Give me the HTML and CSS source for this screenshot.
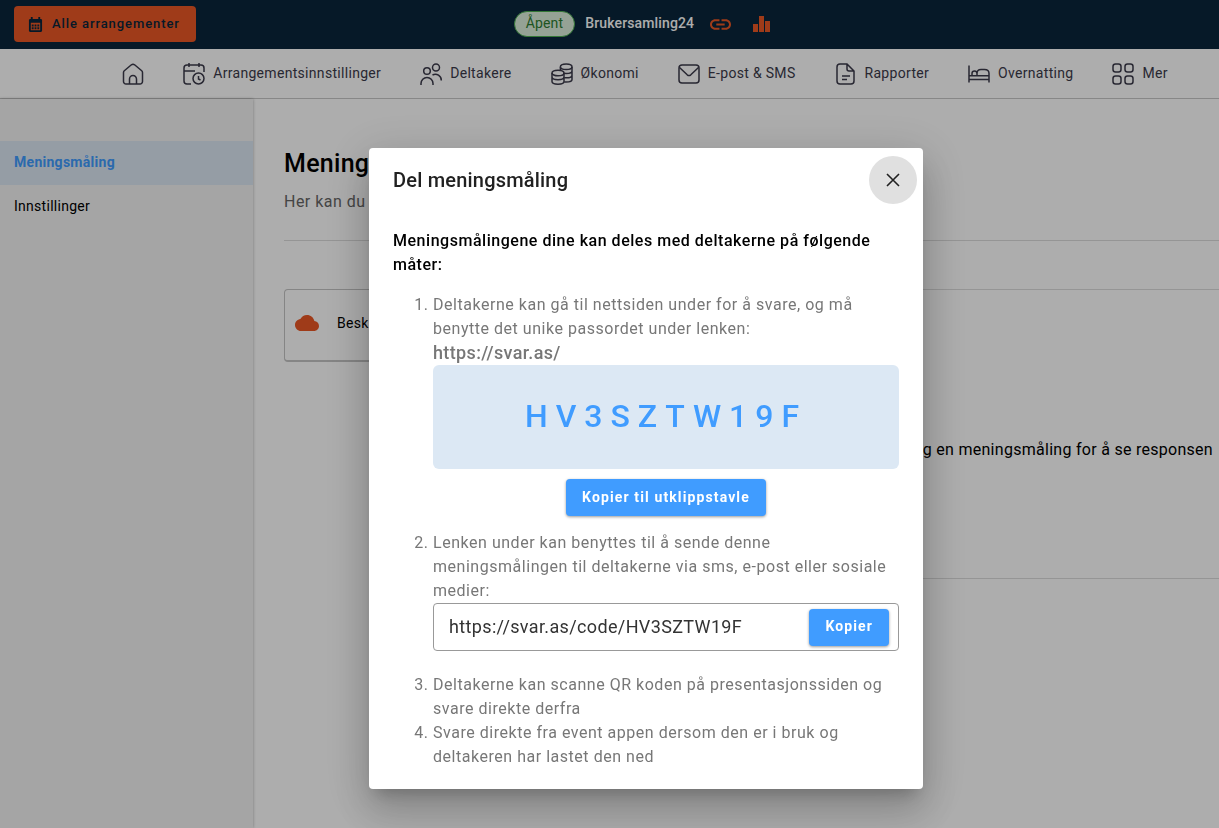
FILE: index.html
```html
<!DOCTYPE html>
<html lang="no">
<head>
<meta charset="utf-8">
<meta name="viewport" content="width=device-width, initial-scale=1">
<title>Meningsmåling</title>
<link rel="stylesheet" href="styles.css">
</head>
<body>
<div class="app">
  <header class="topbar">
    <button class="btn btn-orange" type="button">
      <svg class="icon-sm" viewBox="0 0 16 16" fill="currentColor" aria-hidden="true"><path fill-rule="evenodd" d="M3 0h2v2h6V0h2v2h1l1 1v12l-1 1H2l-1-1V3l1-1h1zM3 6v8h10V6zM4 8h2v2H4zM7 8h2v2H7zM10 8h2v2h-2zM4 11h2v2H4zM7 11h2v2H7zM10 11h2v2h-2z"/></svg>
      Alle arrangementer
    </button>
    <div class="event">
      <span class="chip">Åpent</span>
      <span class="event-name">Brukersamling24</span>
      <a class="event-link" href="#link" aria-label="Lenke"><svg viewBox="2 2 20 20" width="21" height="21" fill="currentColor"><path d="M3.900 12c0-1.710 1.390-3.100 3.100-3.100h4V7H7c-2.760 0-5 2.240-5 5s2.240 5 5 5h4v-1.900H7c-1.710 0-3.100-1.390-3.100-3.100zM8 13h8v-2H8v2zm9-6h-4v1.900h4c1.710 0 3.100 1.390 3.100 3.100s-1.390 3.100-3.100 3.100h-4V17h4c2.760 0 5-2.240 5-5s-2.240-5-5-5z"/></svg></a>
      <a class="event-link" href="#statistikk" aria-label="Statistikk"><svg viewBox="0 0 18 18" width="18" height="18" fill="currentColor"><path d="M0 9h5v8H0zM6 1h5v16H6zM12 6h5v11h-5z"/></svg></a>
    </div>
  </header>

  <nav class="nav" aria-label="Hovedmeny">
    <a href="#hjem" aria-label="Hjem"><svg class="icon" viewBox="0 0 22 22"><path d="M1.500 9.500q0-1 .8-1.700L9.400 1.800q1.600-1.200 3.200 0l7.100 6q.8.700.8 1.700V18.500a2.500 2.500 0 0 1-2.500 2.500H4a2.500 2.500 0 0 1-2.500-2.500zM7.500 21v-5a3.500 3.500 0 0 1 7 0v5"/></svg></a>
    <a href="#innstillinger"><svg class="icon" viewBox="0 0 22 22"><path d="M8 21H4a3 3 0 0 1-3-3V5a3 3 0 0 1 3-3h14a3 3 0 0 1 3 3v4M1 8h11M6 0v4M16 0v4"/><circle cx="15.500" cy="15.500" r="5.500"/><path d="M15.500 13v3l2 1"/></svg><span>Arrangementsinnstillinger</span></a>
    <a href="#deltakere"><svg class="icon" viewBox="0 0 22 22"><circle cx="7" cy="8" r="3.300"/><circle cx="16" cy="4.500" r="3.500"/><path d="M1 22v-1.500a6 6 0 0 1 12 0V22M12.500 12a6 6 0 0 1 8.800 5.500"/></svg><span>Deltakere</span></a>
    <a href="#okonomi"><svg class="icon" viewBox="0 0 22 22"><ellipse cx="15.200" cy="3.800" rx="5.800" ry="2.800"/><path d="M9.400 4v3M21 4v12.500c0 1.400-2.500 2.500-5.800 2.500h-2M21 8c0 1.400-2.500 2.500-5.800 2.500l-3-.3M21 12.200c0 1.400-2.500 2.600-5.800 2.600h-2"/><ellipse cx="7" cy="10" rx="6" ry="2.800"/><path d="M1 10v8.500C1 20 3.700 21.200 7 21.200s6-1.200 6-2.700V10M1 14c0 1.500 2.700 2.700 6 2.700s6-1.200 6-2.700"/></svg><span>Økonomi</span></a>
    <a href="#epost"><svg class="icon" viewBox="0 0 22 22"><rect x="1" y="2" width="20" height="18" rx="3"/><path d="m1.500 4.500 7.700 7.300q1.800 1.500 3.600 0l7.700-7.300"/></svg><span>E-post &amp; SMS</span></a>
    <a href="#rapporter"><svg class="icon" viewBox="0 0 22 22"><path d="M12 1H5a3 3 0 0 0-3 3v14a3 3 0 0 0 3 3h11a3 3 0 0 0 3-3V8zM12 1v5a2 2 0 0 0 2 2h5M7 13h8M7 16.500h5"/></svg><span>Rapporter</span></a>
    <a href="#overnatting"><svg class="icon" viewBox="0 0 22 22"><path d="M1 2.500v17M1 12.800h20M1 16.500h20M21 19.500v-9C21 8 19 6.500 16.500 6.500H13c-2.500 0-4 1.500-4 4v2.300M9 10.500a2.500 2.500 0 0 0-5 0v2.300"/></svg><span>Overnatting</span></a>
    <a href="#mer"><svg class="icon" viewBox="0 0 22 22"><rect x="1" y="1" width="8" height="8" rx="2.500"/><rect x="13" y="1" width="8" height="8" rx="2.500"/><rect x="1" y="13" width="8" height="8" rx="2.500"/><rect x="13" y="13" width="8" height="8" rx="2.500"/></svg><span>Mer</span></a>
  </nav>

  <div class="body">
    <aside class="sidebar">
      <a class="side-link active" href="#meningsmaling">Meningsmåling</a>
      <a class="side-link" href="#oppsett">Innstillinger</a>
    </aside>
    <main class="main">
      <h1>Mening</h1>
      <p class="lead">Her kan du</p>
      <hr>
      <div class="polls">
        <div class="poll-card">
          <svg width="24" height="16" viewBox="0 4 24 16" fill="currentColor" aria-hidden="true"><path d="M19.350 10.040C18.670 6.590 15.640 4 12 4 9.110 4 6.600 5.640 5.350 8.040 2.340 8.360 0 10.910 0 14c0 3.310 2.690 6 6 6h13c2.760 0 5-2.240 5-5 0-2.640-2.050-4.780-4.650-4.960z"/></svg>
          <span>Besk</span>
        </div>
        <section class="response">Velg en meningsmåling for å se responsen</section>
      </div>
    </main>
  </div>
</div>

<div class="overlay">
  <div class="dialog" role="dialog" aria-modal="true" aria-labelledby="dialog-title">
    <div class="dialog-head">
      <h2 id="dialog-title">Del meningsmåling</h2>
      <button class="close" type="button" aria-label="Lukk"><svg width="14" height="14" viewBox="0 0 14 14"><path d="m1 1 12 12M13 1 1 13" fill="none" stroke="currentColor" stroke-width="1.600"/></svg></button>
    </div>
    <div class="dialog-body">
      <p class="intro">Meningsmålingene dine kan deles med deltakerne på følgende måter:</p>
      <ol class="ways">
        <li>Deltakerne kan gå til nettsiden under for å svare, og må benytte det unike passordet under lenken:
          <a class="answer-link" href="https://svar.as/">https://svar.as/</a>
          <div class="code">HV3SZTW19F</div>
          <div class="copy-row"><button class="btn btn-blue" type="button">Kopier til utklippstavle</button></div>
        </li>
        <li>Lenken under kan benyttes til å sende denne meningsmålingen til deltakerne via sms, e-post eller sosiale medier:
          <div class="copy-field">
            <input type="text" value="https://svar.as/code/HV3SZTW19F" aria-label="Lenke til meningsmåling" readonly>
            <button class="btn btn-blue" type="button">Kopier</button>
          </div>
        </li>
        <li>Deltakerne kan scanne QR koden på presentasjonssiden og svare direkte derfra</li>
        <li>Svare direkte fra event appen dersom den er i bruk og deltakeren har lastet den ned</li>
      </ol>
    </div>
  </div>
</div>
</body>
</html>
```
FILE: styles.css
```css
:root {
  --navy: #09263b;
  --orange: #ea5826;
  --blue: #409cff;
  --pale: #dce8f4;
}

* { box-sizing: border-box; }

body {
  margin: 0;
  font-family: Roboto, "Liberation Sans", sans-serif;
  font-size: 14px;
  line-height: 20px;
  letter-spacing: .02em;
  color: #000;
  background: #fff;
}

a { color: inherit; text-decoration: none; }

button, input { font: inherit; letter-spacing: inherit; }

.app {
  display: flex;
  flex-direction: column;
  height: 100vh;
  overflow: hidden;
}

.topbar {
  display: grid;
  grid-template-columns: 1fr auto 1fr;
  align-items: center;
  padding: 6px 0 7px 14px;
  background: var(--navy);
}

.btn {
  display: inline-flex;
  align-items: center;
  justify-content: center;
  height: 36px;
  padding: 0 16px;
  border: 0;
  border-radius: 4px;
  font-size: 14px;
  line-height: 20px;
  font-weight: 700;
  letter-spacing: .08em;
  white-space: nowrap;
}

.btn-orange {
  justify-self: start;
  gap: 9px;
  padding: 0 16px 0 14px;
  font-size: 13px;
  font-weight: 500;
  letter-spacing: .07em;
  color: var(--navy);
  background: var(--orange);
}

.btn-blue {
  height: 37px;
  padding-bottom: 2px;
  color: #fff;
  background: var(--blue);
  box-shadow: 0 1px 3px rgba(0, 0, 0, .4);
}

.icon-sm { width: 15px; height: 15px; }

.event {
  display: flex;
  align-items: center;
  padding-left: 52px;
  letter-spacing: .01em;
  color: #fff;
}

.chip {
  padding: 1px 11px 3px;
  border: 1px solid #4caf50;
  border-radius: 13px;
  color: #2e7d32;
  background: #dcefdc;
}

.event-name { margin-left: 10px; padding-bottom: 2px; font-weight: 500; }

.event-link { display: flex; margin-left: 16px; color: var(--orange); }

.event-link + .event-link { margin-left: 22px; }

.nav {
  display: flex;
  justify-content: center;
  gap: 39px;
  padding: 14px 0 13px 71px;
  border-bottom: 1px solid #c8c8c8;
  letter-spacing: .022em;
  color: #3b3a4a;
  white-space: nowrap;
}

.nav a { display: flex; align-items: center; gap: 8px; }

.nav span { padding-bottom: 2px; }

.icon {
  width: 22px;
  height: 22px;
  fill: none;
  stroke: currentColor;
  stroke-width: 1.5;
  overflow: visible;
}

.body { display: flex; flex: 1; min-height: 0; }

.sidebar {
  flex: 0 0 253px;
  padding-top: 42px;
  background: #f4f4f4;
  box-shadow: 0 0 3px rgba(0, 0, 0, .3);
}

.side-link { display: block; padding: 11px 14px 13px; }

.side-link.active { font-weight: 700; color: var(--blue); background: var(--pale); }

.main { flex: 1; min-width: 0; padding: 48px 0 0 31px; }

h1 { margin: 0; font-size: 25px; line-height: 34px; font-weight: 500; }

.lead {
  margin: 11px 0 28px;
  font-size: 16px;
  line-height: 20px;
  letter-spacing: .03em;
  color: #666;
}

hr { height: 1px; margin: 0; border: 0; background: #dcdcdc; }

.polls { display: flex; align-items: flex-start; gap: 32px; margin-top: 48px; }

.poll-card {
  display: flex;
  flex: 0 0 320px;
  align-items: center;
  gap: 18px;
  height: 73px;
  padding: 0 10px 4px;
  border: 1px solid #c4c4c4;
  border-bottom-width: 2px;
  border-radius: 4px;
}

.poll-card svg { color: var(--orange); }

.response {
  display: flex;
  flex: 1;
  align-items: center;
  justify-content: flex-end;
  height: 290px;
  padding: 32px 6px 0 0;
  border: solid #dcdcdc;
  border-width: 1px 0 1px 1px;
  font-size: 16px;
  white-space: nowrap;
}

.overlay {
  position: fixed;
  inset: 0;
  display: flex;
  justify-content: center;
  align-items: flex-start;
  padding: 148px 0 0 73px;
  background: rgba(0, 0, 0, .32);
}

.dialog {
  width: 100%;
  max-width: 554px;
  border-radius: 4px;
  background: #fff;
  box-shadow: 0 11px 15px -7px rgba(0, 0, 0, .2), 0 24px 38px 3px rgba(0, 0, 0, .14), 0 9px 46px 8px rgba(0, 0, 0, .12);
}

.dialog-head {
  display: flex;
  align-items: center;
  justify-content: space-between;
  padding: 8px 6px 8px 24px;
}

h2 { margin: 0; font-size: 20px; line-height: 32px; font-weight: 500; letter-spacing: .01em; color: #212121; }

.close {
  display: grid;
  place-items: center;
  width: 48px;
  height: 48px;
  padding: 0;
  border: 0;
  border-radius: 50%;
  color: #212121;
  background: #e0e0e0;
}

.dialog-body {
  padding: 17px 24px 20px;
  font-size: 16px;
  line-height: 24px;
  letter-spacing: .033em;
}

.intro { margin: 0 0 16px; font-weight: 500; }

.ways { margin: 0; padding-left: 40px; color: #777; }

.answer-link { display: block; font-size: 18px; font-weight: 500; letter-spacing: .02em; }

.code {
  padding: 31px 0 33px;
  border-radius: 6px;
  font-size: 32px;
  line-height: 40px;
  font-weight: 500;
  letter-spacing: 8px;
  text-align: center;
  color: var(--blue);
  background: var(--pale);
}

.copy-row { display: flex; justify-content: center; padding: 10px 0 15px; }

.copy-field {
  display: flex;
  align-items: center;
  height: 48px;
  margin-bottom: 22px;
  padding: 0 9px 0 15px;
  border: 1px solid #999;
  border-radius: 4px;
}

.copy-field input {
  flex: 1;
  min-width: 0;
  padding: 0;
  border: 0;
  outline: 0;
  font-size: 18px;
  letter-spacing: .02em;
  color: #333;
  background: none;
}
```
